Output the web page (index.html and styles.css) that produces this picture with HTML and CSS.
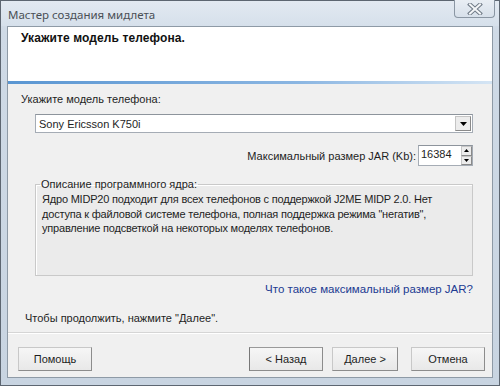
FILE: index.html
```html
<!DOCTYPE html>
<html lang="ru">
<head>
<meta charset="utf-8">
<title>Мастер создания мидлета</title>
<link rel="stylesheet" href="styles.css">
</head>
<body>
<div class="window">
  <div class="titlebar">
    <span class="title">Мастер создания мидлета</span>
    <div class="close">
      <svg width="16" height="12" viewBox="0 0 16 12">
        <path d="M3 1.5 L13 10.5 M13 1.5 L3 10.5" stroke="#6f7a86" stroke-width="4" stroke-linecap="square" fill="none"/>
        <path d="M3 1.5 L13 10.5 M13 1.5 L3 10.5" stroke="#f4f6f8" stroke-width="2" stroke-linecap="square" fill="none"/>
      </svg>
    </div>
  </div>
  <div class="client">
    <div class="header">
      <h1 class="header-title">Укажите модель телефона.</h1>
    </div>
    <div class="header-line"></div>
    <div class="content">
      <div class="label">Укажите модель телефона:</div>
      <div class="combo">
        <span class="combo-text">Sony Ericsson K750i</span>
        <span class="combo-btn">
          <svg width="7" height="4" viewBox="0 0 7 4"><path d="M0 0 H7 L3.5 4 Z" fill="#000"/></svg>
        </span>
      </div>
      <div class="jar-row">
        <span class="jar-label">Максимальный размер JAR (Kb):</span>
        <div class="spin">
          <span class="spin-text">16384</span>
          <div class="spin-btns">
            <span class="spin-btn"><svg width="5" height="3" viewBox="0 0 5 3"><path d="M0 3 H5 L2.5 0 Z" fill="#000"/></svg></span>
            <span class="spin-btn"><svg width="5" height="3" viewBox="0 0 5 3"><path d="M0 0 H5 L2.5 3 Z" fill="#000"/></svg></span>
          </div>
        </div>
      </div>
      <fieldset class="group">
        <legend class="group-legend">Описание программного ядра:</legend>
        <p class="group-text">Ядро MIDP20 подходит для всех телефонов с поддержкой J2ME MIDP 2.0. Нет доступа к файловой системе телефона, полная поддержка режима "негатив", управление подсветкой на некоторых моделях телефонов.</p>
      </fieldset>
      <div class="link-row"><a class="link" href="#">Что такое максимальный размер JAR?</a></div>
      <div class="hint">Чтобы продолжить, нажмите "Далее".</div>
    </div>
    <div class="footer">
      <button class="btn btn-help">Помощь</button>
      <div class="spacer"></div>
      <button class="btn btn-back">&lt; Назад</button>
      <button class="btn btn-next">Далее &gt;</button>
      <button class="btn btn-cancel">Отмена</button>
    </div>
  </div>
</div>
</body>
</html>
```
FILE: styles.css
```css
* { box-sizing: border-box; }
html, body { margin: 0; padding: 0; }
body {
  width: 500px;
  height: 386px;
  overflow: hidden;
  font-family: "Liberation Sans", Arial, sans-serif;
  font-size: 11px;
  color: #1e1e1e;
}
.window {
  width: 500px;
  height: 386px;
  border: 1px solid #5d6671;
  background: linear-gradient(#dbe3ec, #cfdae6 30px, #c8d4e1);
  display: flex;
  flex-direction: column;
}
.titlebar {
  height: 25px;
  display: flex;
  align-items: flex-start;
  padding-left: 7px;
  background: linear-gradient(#e2e9f1, #d6e0eb);
}
.title {
  font-family: "Noto Sans", "Liberation Sans", sans-serif;
  font-size: 11.5px;
  color: #4a4f55;
  margin-top: 6px;
  flex: 1;
}
.close {
  width: 41px;
  height: 18px;
  margin-right: 4px;
  margin-top: -1px;
  border: 1px solid #8a96a3;
  border-top: none;
  border-radius: 0 0 4px 4px;
  background: linear-gradient(#e9eef4, #d7e0ea);
  display: flex;
  align-items: center;
  justify-content: center;
}
.client {
  flex: 1;
  margin: 0 6px 7px 6px;
  border: 1px solid #8e9aa6;
  background: #f0f0f0;
  display: flex;
  flex-direction: column;
}
.header {
  height: 54px;
  background: #fff;
  padding: 4px 0 0 13px;
}
.header-title {
  margin: 0;
  font-size: 12px;
  font-weight: bold;
  color: #111;
  letter-spacing: 0.1px;
}
.header-line {
  height: 3px;
  background: linear-gradient(to right, #5a96d2, #8bb6e2 60%, #d5e5f4);
}
.content {
  flex: 1;
  padding: 9px 19px 0 13px;
  display: flex;
  flex-direction: column;
}
.label {
  height: 13px;
  line-height: 13px;
}
.combo {
  margin: 8px 0 0 14px;
  height: 19px;
  background: #fff;
  border: 1px solid #a5acb5;
  border-top-color: #8d949c;
  display: flex;
  align-items: center;
}
.combo-text {
  flex: 1;
  padding-left: 3px;
}
.combo-btn {
  width: 16px;
  height: 15px;
  margin-right: 1px;
  background: #ececec;
  border: 1px solid #c4c4c4;
  border-right-color: #8a8a8a;
  border-bottom-color: #8a8a8a;
  display: flex;
  align-items: center;
  justify-content: center;
}
.jar-row {
  margin-top: 12px;
  display: flex;
  justify-content: flex-end;
  align-items: center;
  gap: 2px;
}
.spin {
  width: 55px;
  height: 21px;
  background: #fff;
  border: 1px solid #a5acb5;
  border-top-color: #8d949c;
  display: flex;
  align-items: flex-start;
}
.spin-text {
  flex: 1;
  padding: 2px 0 0 2px;
}
.spin-btns {
  width: 11px;
  height: 19px;
  display: flex;
  flex-direction: column;
}
.spin-btn {
  flex: 1;
  background: #ececec;
  border: 1px solid #c7c7c7;
  border-right-color: #8a8a8a;
  border-bottom-color: #8a8a8a;
  display: flex;
  align-items: center;
  justify-content: center;
}
.group {
  margin: 12px 0 0 14px;
  padding: 2px 6px 0 6px;
  height: 98px;
  border: 1px solid #c9c9c9;
  box-shadow: inset 1px 1px 0 #fff;
  background: #ebebeb;
  min-width: 0;
}
.group-legend {
  padding: 0 1px;
  margin-left: -2px;
}
.group-text {
  margin: 0;
  line-height: 14.5px;
  letter-spacing: -0.2px;
}
.link-row {
  margin-top: 7px;
  display: flex;
  justify-content: flex-end;
}
.link {
  color: #213a92;
  text-decoration: none;
  font-size: 11.5px;
}
.hint {
  margin: 17px 0 0 4px;
}
.footer {
  height: 45px;
  border-top: 1px solid #d5d5d5;
  box-shadow: inset 0 1px 0 #fff;
  display: flex;
  align-items: flex-start;
  padding: 14px 7px 0 10px;
}
.spacer { flex: 1; }
.btn {
  height: 24px;
  width: 74px;
  font-family: "Liberation Sans", Arial, sans-serif;
  font-size: 11px;
  color: #1e1e1e;
  background: linear-gradient(#f6f6f6, #e8e8e8);
  border: 1px solid #c8c8c8;
  border-right-color: #8c8c8c;
  border-bottom-color: #8c8c8c;
  padding: 0;
}
.btn-back { border-left-color: #777; border-top-color: #999; }
.btn-next { margin-left: 9px; width: 66px; }
.btn-cancel { margin-left: 13px; }
```
